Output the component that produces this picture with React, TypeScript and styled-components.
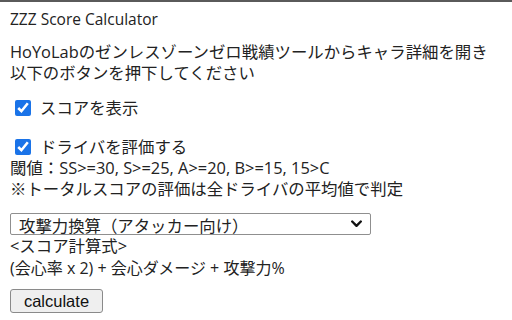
import * as React from 'react';
import styled, { createGlobalStyle } from "styled-components";

const GlobalStyle = createGlobalStyle`
    html, body {
        margin: 0;
        padding: 0;
        background: #ffffff;
    }
    body {
        font-family: "Open Sans", "Noto Sans CJK JP", sans-serif;
        color: #222222;
    }
`;

const Popup = styled.div`
    width: 512px;
    height: 320px;
    box-sizing: border-box;
    border-top: 2px solid #5a5a5a;
    padding: 8px 10px 0 10px;
    overflow: hidden;
`;

const Title = styled.div`
    font-size: 15.5px;
    line-height: 18px;
    margin-bottom: 13px;
`;

const Lead = styled.p`
    margin: 0 0 14px 0;
    font-size: 16.4px;
    line-height: 21px;
`;

const CheckRow = styled.label<{ $gapAfter?: number }>`
    display: flex;
    align-items: center;
    gap: 9px;
    padding-left: 5px;
    font-size: 16.4px;
    line-height: 21px;
    margin-bottom: ${p => p.$gapAfter ?? 0}px;
`;

const Box = styled.input`
    width: 16px;
    height: 16px;
    margin: 0;
    accent-color: #1a73e8;
`;

const Note = styled.div<{ $gapAfter?: number }>`
    font-size: 16.4px;
    line-height: 21px;
    margin-bottom: ${p => p.$gapAfter ?? 0}px;
`;

const SelectWrap = styled.div`
    position: relative;
    width: 361px;
`;

const Select = styled.select`
    display: block;
    width: 100%;
    height: 22px;
    padding: 0 0 0 8px;
    margin: 0;
    appearance: none;
    font-family: "Open Sans", "Noto Sans CJK JP", sans-serif;
    font-size: 16.4px;
    color: #222222;
    background: #ffffff;
    border: 1px solid #8f8f8f;
    border-radius: 2px;
`;

const Chevron = styled.svg`
    position: absolute;
    right: 9px;
    top: 7px;
    width: 11px;
    height: 8px;
    pointer-events: none;
`;

const Formula = styled.div`
    font-size: 16px;
    line-height: 24px;
    margin-bottom: 9px;
`;

const Button = styled.button`
    width: 93px;
    height: 24px;
    padding: 0;
    font-family: "Liberation Sans", Arial, sans-serif;
    font-size: 16.5px;
    color: #111111;
    background: #efefef;
    border: 1px solid #8a8a8a;
    border-radius: 3px;
`;

const App: React.FC = () => {
    return (
        <>
            <GlobalStyle/>
            <Popup>
                <Title>ZZZ Score Calculator</Title>
                <Lead>
                    HoYoLabのゼンレスゾーンゼロ戦績ツールからキャラ詳細を開き<br/>
                    以下のボタンを押下してください
                </Lead>
                <CheckRow $gapAfter={18}>
                    <Box type="checkbox" defaultChecked/>
                    スコアを表示
                </CheckRow>
                <CheckRow>
                    <Box type="checkbox" defaultChecked/>
                    ドライバを評価する
                </CheckRow>
                <Note>閾値：SS&gt;=30, S&gt;=25, A&gt;=20, B&gt;=15, 15&gt;C</Note>
                <Note $gapAfter={14}>※トータルスコアの評価は全ドライバの平均値で判定</Note>
                <SelectWrap>
                    <Select defaultValue="atk">
                        <option value="atk">攻撃力換算（アタッカー向け）</option>
                    </Select>
                    <Chevron viewBox="0 0 11 8">
                        <path d="M1.2 1.5 L5.5 5.8 L9.8 1.5" fill="none" stroke="#111111" strokeWidth="2.4" strokeLinecap="round" strokeLinejoin="round"/>
                    </Chevron>
                </SelectWrap>
                <Note>&lt;スコア計算式&gt;</Note>
                <Formula>(会心率 x 2) + 会心ダメージ + 攻撃力%</Formula>
                <Button>calculate</Button>
            </Popup>
        </>
    );
}

export default App;
